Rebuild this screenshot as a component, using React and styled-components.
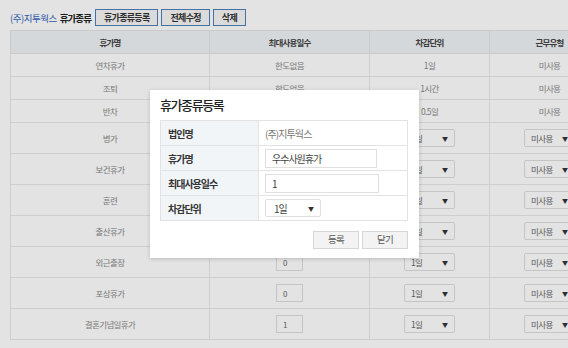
import styled, { createGlobalStyle } from "styled-components";

const GlobalStyle = createGlobalStyle`
  html, body {
    margin: 0;
    padding: 0;
    background: #ffffff;
    overflow: hidden;
  }
  body {
    font-family: "Noto Sans CJK KR", "Noto Sans", sans-serif;
  }
`;

const Page = styled.div`
  position: relative;
  width: 568px;
  height: 348px;
  overflow: hidden;
  box-sizing: border-box;
  padding: 9px 0 0 10px;
`;

const TopBar = styled.div`
  display: flex;
  align-items: center;
  gap: 3px;
  height: 17px;
  margin-bottom: 4px;
`;

const Company = styled.span`
  font-size: 9.5px;
  letter-spacing: -0.5px;
  color: #3366bb;
`;

const BarTitle = styled.span`
  font-size: 9.5px;
  letter-spacing: -0.9px;
  font-weight: bold;
  color: #222;
  margin-right: 1px;
`;

const TopButton = styled.button`
  height: 17px;
  box-sizing: border-box;
  padding: 0 8px;
  border: 1px solid #4f81b8;
  background: #f7f7f7;
  font-family: inherit;
  font-size: 9px;
  letter-spacing: -0.7px;
  font-weight: bold;
  color: #333;
  line-height: 1;
`;

const Table = styled.table`
  border-collapse: collapse;
  table-layout: fixed;
  width: 599px;
  border: 1px solid #e6e6e6;
`;

const Th = styled.th`
  height: 22px;
  padding: 0;
  background: #f0f3f7;
  border: 1px solid #e3e3e3;
  font-size: 8.5px;
  letter-spacing: -0.8px;
  font-weight: bold;
  color: #444;
  text-align: center;
`;

const Td = styled.td`
  height: ${(p) => (p.$tall ? "30px" : "22px")};
  padding: 0;
  border: 1px solid #e8e8e8;
  font-size: 8.5px;
  letter-spacing: -0.6px;
  color: #888;
  text-align: center;
  vertical-align: middle;
`;

const NumBox = styled.span`
  display: inline-flex;
  align-items: center;
  width: 27px;
  height: 18px;
  box-sizing: border-box;
  padding-left: 6px;
  border: 1px solid #dedede;
  background: #fff;
  font-size: 8px;
  color: #666;
  vertical-align: middle;
`;

const SelectBox = styled.span`
  display: inline-flex;
  align-items: center;
  justify-content: space-between;
  width: 51px;
  height: 18px;
  box-sizing: border-box;
  padding: 0 6px 0 6px;
  border: 1px solid #dedede;
  border-radius: 2px;
  background: #fff;
  font-size: 8.5px;
  letter-spacing: -0.6px;
  color: #666;
  vertical-align: middle;
`;

const Arrow = styled.span`
  font-size: 6px;
  color: #333;
  letter-spacing: 0;
`;

const Overlay = styled.div`
  position: absolute;
  inset: 0;
  background: rgba(0, 0, 0, 0.11);
`;

const Modal = styled.div`
  position: absolute;
  left: 150px;
  top: 90px;
  width: 269px;
  height: 168px;
  box-sizing: border-box;
  padding: 5px 11px 8px 10px;
  background: #fff;
  box-shadow: 0 1px 4px rgba(0, 0, 0, 0.18);
  display: flex;
  flex-direction: column;
`;

const ModalTitle = styled.div`
  font-size: 13px;
  letter-spacing: -1.4px;
  font-weight: 500;
  line-height: 20px;
  color: #222;
  margin-bottom: 5px;
`;

const FormTable = styled.table`
  border-collapse: collapse;
  table-layout: fixed;
  width: 248px;
  border: 1px solid #e3e3e3;
`;

const Label = styled.th`
  width: 98px;
  height: 25px;
  box-sizing: border-box;
  padding: 0 0 0 7px;
  background: #f2f5f8;
  border: 1px solid #e3e3e3;
  text-align: left;
  font-size: 10px;
  letter-spacing: -1px;
  font-weight: bold;
  color: #333;
`;

const Value = styled.td`
  padding: 0 0 0 6px;
  border: 1px solid #e3e3e3;
  font-size: 10px;
  letter-spacing: -0.9px;
  color: #777;
`;

const TextField = styled.span`
  display: flex;
  align-items: center;
  width: ${(p) => p.$w}px;
  height: 19px;
  box-sizing: border-box;
  padding: 0 6px;
  border: 1px solid #e0e0e0;
  font-size: 10px;
  letter-spacing: -1px;
  color: #444;
`;

const ModalSelect = styled.span`
  display: flex;
  align-items: center;
  justify-content: space-between;
  width: 56px;
  height: 18px;
  box-sizing: border-box;
  padding: 0 6px 0 8px;
  border: 1px solid #e0e0e0;
  border-radius: 2px;
  font-size: 10px;
  letter-spacing: -1px;
  color: #444;
`;

const Footer = styled.div`
  display: flex;
  justify-content: flex-end;
  gap: 3px;
  margin-top: 10px;
`;

const ModalButton = styled.button`
  width: 46px;
  height: 18px;
  box-sizing: border-box;
  padding: 0;
  border: 1px solid #d6d6d6;
  background: #f3f3f3;
  font-family: inherit;
  font-size: 9.5px;
  letter-spacing: -0.8px;
  color: #555;
  line-height: 1;
`;

const textRows = [
  { name: "연차휴가", max: "한도없음", unit: "1일" },
  { name: "조퇴", max: "한도없음", unit: "1시간" },
  { name: "반차", max: "한도없음", unit: "0.5일" },
];

const editRows = [
  { name: "병가", max: "0" },
  { name: "보건휴가", max: "0" },
  { name: "훈련", max: "0" },
  { name: "출산휴가", max: "0" },
  { name: "외근출장", max: "0" },
  { name: "포상휴가", max: "0" },
  { name: "결혼기념일휴가", max: "1" },
];

function App() {
  return (
    <Page>
      <GlobalStyle />
      <TopBar>
        <Company>(주)지투웍스</Company>
        <BarTitle>휴가종류</BarTitle>
        <TopButton>휴가종류등록</TopButton>
        <TopButton>전체수정</TopButton>
        <TopButton>삭제</TopButton>
      </TopBar>
      <Table>
        <colgroup>
          <col style={{ width: 199 }} />
          <col style={{ width: 160 }} />
          <col style={{ width: 120 }} />
          <col style={{ width: 120 }} />
        </colgroup>
        <thead>
          <tr>
            <Th>휴가명</Th>
            <Th>최대사용일수</Th>
            <Th>차감단위</Th>
            <Th>근무유형</Th>
          </tr>
        </thead>
        <tbody>
          {textRows.map((row) => (
            <tr key={row.name}>
              <Td>{row.name}</Td>
              <Td>{row.max}</Td>
              <Td>{row.unit}</Td>
              <Td>미사용</Td>
            </tr>
          ))}
          {editRows.map((row) => (
            <tr key={row.name}>
              <Td $tall>{row.name}</Td>
              <Td $tall>
                <NumBox>{row.max}</NumBox>
              </Td>
              <Td $tall>
                <SelectBox>
                  1일<Arrow>▼</Arrow>
                </SelectBox>
              </Td>
              <Td $tall>
                <SelectBox>
                  미사용<Arrow>▼</Arrow>
                </SelectBox>
              </Td>
            </tr>
          ))}
        </tbody>
      </Table>
      <Overlay />
      <Modal>
        <ModalTitle>휴가종류등록</ModalTitle>
        <FormTable>
          <tbody>
            <tr>
              <Label>법인명</Label>
              <Value>(주)지투웍스</Value>
            </tr>
            <tr>
              <Label>휴가명</Label>
              <Value>
                <TextField $w={112}>우수사원휴가</TextField>
              </Value>
            </tr>
            <tr>
              <Label>최대사용일수</Label>
              <Value>
                <TextField $w={114}>1</TextField>
              </Value>
            </tr>
            <tr>
              <Label>차감단위</Label>
              <Value>
                <ModalSelect>
                  1일<Arrow>▼</Arrow>
                </ModalSelect>
              </Value>
            </tr>
          </tbody>
        </FormTable>
        <Footer>
          <ModalButton>등록</ModalButton>
          <ModalButton>닫기</ModalButton>
        </Footer>
      </Modal>
    </Page>
  );
}

export default App;
